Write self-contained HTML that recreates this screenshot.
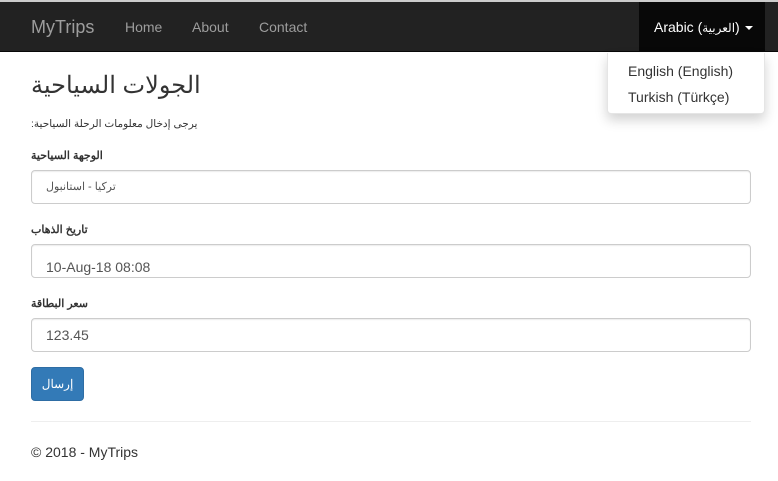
<!DOCTYPE html>
<html><head><meta charset="utf-8"><style>
*{box-sizing:border-box;margin:0;padding:0}
body{width:778px;height:481px;overflow:hidden;background:#fff;font-family:"Liberation Sans","Noto Sans CJK SC",sans-serif;font-size:14px;color:#333;position:relative}
.top{position:absolute;left:0;top:0;width:778px;height:2px;background:#ccc}
.nav{position:absolute;left:0;top:2px;width:778px;height:50px;background:#222;border-bottom:1px solid #080808}
.nav a{position:absolute;color:#9d9d9d;text-decoration:none;top:17px;font-size:14px}
.brand{font-size:18px!important;top:15px!important;left:31px}
.lang{position:absolute;left:639px;top:0;width:126px;height:50px;background:#080808;color:#fff;font-size:14px;line-height:51px;padding-left:15px;white-space:nowrap}
.caret{display:inline-block;width:0;height:0;border-left:4px solid transparent;border-right:4px solid transparent;border-top:4px solid #fff;vertical-align:middle;margin-left:5px}
.dd{position:absolute;left:607px;top:53px;width:158px;height:61px;background:#fff;box-shadow:0 6px 12px rgba(0,0,0,.18);border:1px solid rgba(0,0,0,.1);border-top:none;border-radius:0 0 4px 4px}
.dd div{position:absolute;left:20px;font-size:14px;color:#333}
h1{position:absolute;left:31px;top:71px;font-size:24px;font-weight:normal;color:#333}
.t{position:absolute;left:31px;white-space:nowrap}
label{position:absolute;left:31px;font-weight:bold;font-size:11px}
.in{position:absolute;left:31px;width:720px;height:34px;border:1px solid #ccc;border-radius:4px;padding-left:14px;color:#555;font-size:14px;box-shadow:inset 0 1px 1px rgba(0,0,0,.075)}
.btn{position:absolute;left:31px;top:367px;width:53px;height:34px;background:#337ab7;border:1px solid #2e6da4;border-radius:4px;color:#fff;font-size:12px;text-align:center;line-height:32px}
hr{position:absolute;left:31px;top:421px;width:720px;border:0;border-top:1px solid #eee}
</style></head><body>
<div class="top"></div>
<div class="nav">
<a class="brand">MyTrips</a><a style="left:125px">Home</a><a style="left:192px">About</a><a style="left:259px">Contact</a>
<div class="lang">Arabic (<span style="font-size:12px">العربية</span>)<span class="caret"></span></div>
</div>
<div class="dd"><div style="top:10px">English (English)</div><div style="top:36px">Turkish (Türkçe)</div></div>
<h1>الجولات السياحية</h1>
<div class="t" style="top:118px;font-size:10.5px">:يرجى إدخال معلومات الرحلة السياحية</div>
<label style="top:149px">الوجهة السياحية</label>
<div class="in" style="top:170px;line-height:32px;font-size:11px">تركيا - استانبول</div>
<label style="top:223px">تاريخ الذهاب</label>
<div class="in" style="top:244px;line-height:44px;overflow:hidden">10-Aug-18 08:08</div>
<label style="top:297px">سعر البطاقة</label>
<div class="in" style="top:318px;line-height:32px">123.45</div>
<div class="btn">إرسال</div>
<hr>
<div class="t" style="top:444px">© 2018 - MyTrips</div>
</body></html>
